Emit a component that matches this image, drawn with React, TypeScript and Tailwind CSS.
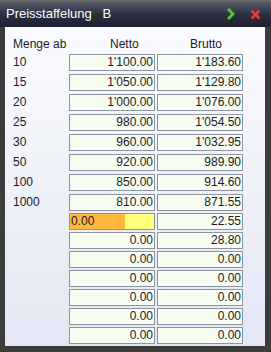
import React from 'react';

const rows: { menge: string; netto: string; brutto: string }[] = [
  { menge: '10', netto: "1'100.00", brutto: "1'183.60" },
  { menge: '15', netto: "1'050.00", brutto: "1'129.80" },
  { menge: '20', netto: "1'000.00", brutto: "1'076.00" },
  { menge: '25', netto: '980.00', brutto: "1'054.50" },
  { menge: '30', netto: '960.00', brutto: "1'032.95" },
  { menge: '50', netto: '920.00', brutto: '989.90' },
  { menge: '100', netto: '850.00', brutto: '914.60' },
  { menge: '1000', netto: '810.00', brutto: '871.55' },
  { menge: '', netto: '0.00', brutto: '22.55' },
  { menge: '', netto: '0.00', brutto: '28.80' },
  { menge: '', netto: '0.00', brutto: '0.00' },
  { menge: '', netto: '0.00', brutto: '0.00' },
  { menge: '', netto: '0.00', brutto: '0.00' },
  { menge: '', netto: '0.00', brutto: '0.00' },
  { menge: '', netto: '0.00', brutto: '0.00' },
];

const box = 'h-[17px] border border-[#8e92a2] bg-[#f7fdf0] text-right pr-[1px] leading-[15px]';

const App: React.FC = () => {
  return (
    <div
      className="w-[271px] h-[352px] bg-[#3c3c3c] flex flex-col text-[12px] text-[#1a1a2a]"
      style={{ fontFamily: '"Liberation Sans", Arial, sans-serif' }}
    >
      {/* Title bar */}
      <div className="h-[27px] flex items-center pl-[6px] pr-[10px] bg-gradient-to-b from-[#5a606c] via-[#2c3140] to-[#1c2030] border-t border-[#6a6a6a]">
        <span className="text-white text-[13px] flex-1">Preisstaffelung&nbsp;&nbsp;&nbsp;B</span>
        <svg width="10" height="12" viewBox="0 0 10 12" className="mr-[14px]">
          <polyline points="2,1 7,6 2,11" fill="none" stroke="#4fc23a" strokeWidth="3" />
        </svg>
        <svg width="11" height="11" viewBox="0 0 11 11">
          <path d="M1.5 1.5 L9.5 9.5 M9.5 1.5 L1.5 9.5" stroke="#e83a3a" strokeWidth="2.6" />
        </svg>
      </div>

      {/* Content */}
      <div className="flex-1 ml-[5px] mr-[6px] mb-[6px] bg-gradient-to-b from-[#fafbfe] to-[#e3e7f3] pl-[8px] pt-[9px]">
        <div className="flex h-[15px] items-center mb-[2px]">
          <span className="w-[56px]">Menge ab</span>
          <span className="w-[88px] pl-[41px]">Netto</span>
          <span className="pl-[33px]">Brutto</span>
        </div>
        <div className="flex flex-col gap-[2px]">
          {rows.map((r, i) => (
            <div key={i} className="flex items-center">
              <span className="w-[56px]">{r.menge}</span>
              {i === 8 ? (
                <div className="w-[86px] h-[17px] border border-[#8e92a2] flex leading-[15px]">
                  <div className="w-[55px] bg-[#ffb83e] pl-[1px]">0.00</div>
                  <div className="flex-1 bg-[#ffff80]" />
                </div>
              ) : (
                <div className={`w-[86px] ${box}`}>{r.netto}</div>
              )}
              <div className={`w-[86px] ml-[2px] ${box}`}>{r.brutto}</div>
            </div>
          ))}
        </div>
      </div>
    </div>
  );
};

export default App;
